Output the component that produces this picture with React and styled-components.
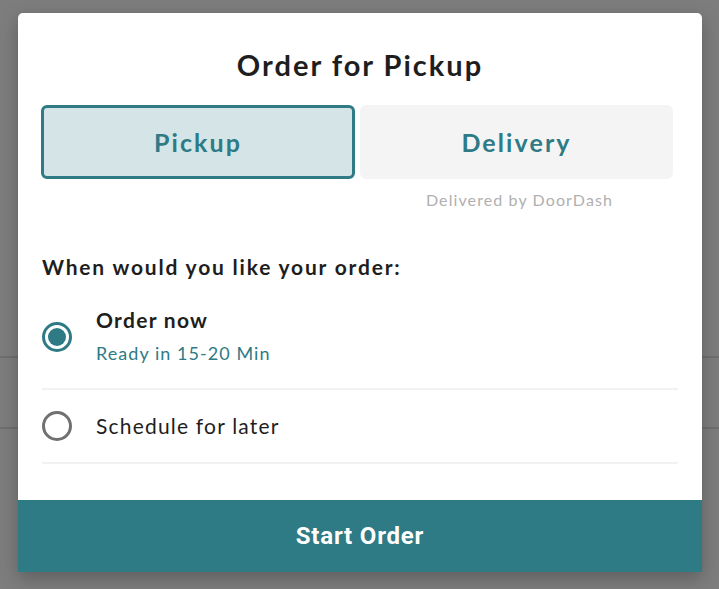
import React, { useState } from "react";
import styled, { createGlobalStyle } from "styled-components";

const Global = createGlobalStyle`
  html, body { margin: 0; padding: 0; }
  body {
    background: #7d7d7d;
    font-family: "Lato", "Noto Sans", sans-serif;
    color: #1e1e1e;
  }
`;

const Page = styled.div`
  position: relative;
  width: 719px;
  height: 589px;
  overflow: hidden;
  background: #7d7d7d;
`;

const BackRows = styled.div`
  display: flex;
  flex-direction: column;
  padding-top: 287px;
`;

const BackRow = styled.div`
  height: 69px;
  border-bottom: 2px solid #6f6f6f;
`;

const Modal = styled.div`
  position: absolute;
  left: 18px;
  top: 13px;
  width: 684px;
  display: flex;
  flex-direction: column;
  background: #fff;
  border-radius: 5px 5px 0 0;
  box-shadow: 0 6px 18px rgba(0, 0, 0, 0.25);
`;

const Body = styled.div`
  display: flex;
  flex-direction: column;
  padding: 34px 24px 36px;
`;

const Title = styled.h1`
  margin: 0;
  text-align: center;
  font-size: 29px;
  line-height: 36px;
  font-weight: 700;
  letter-spacing: 2px;
  color: #1e1e1e;
`;

const Tabs = styled.div`
  display: grid;
  grid-template-columns: 314px 313px;
  column-gap: 5px;
  row-gap: 11px;
  margin: 22px 0 0 -1px;
`;

const Tab = styled.button`
  height: 74px;
  border-radius: 6px;
  border: 3px solid ${(p) => (p.$active ? "#2e7a85" : "transparent")};
  background: ${(p) => (p.$active ? "#d5e4e7" : "#f4f4f4")};
  color: #2e7a85;
  font-family: inherit;
  font-size: 25px;
  font-weight: 700;
  letter-spacing: 2.1px;
  cursor: pointer;
  padding: 0;
`;

const Caption = styled.div`
  grid-column: 2;
  text-align: center;
  font-size: 16px;
  line-height: 20px;
  letter-spacing: 1.1px;
  color: #b0b0b0;
  padding-left: 6px;
`;

const Heading = styled.h2`
  margin: 44px 0 5px;
  font-size: 21px;
  line-height: 26px;
  font-weight: 700;
  letter-spacing: 1.8px;
  color: #1e1e1e;
`;

const Options = styled.div`
  display: flex;
  flex-direction: column;
`;

const Option = styled.label`
  display: flex;
  align-items: center;
  gap: 24px;
  padding: 21px 0;
  border-bottom: 2px solid #f2f2f2;
  cursor: pointer;
`;

const Radio = styled.span`
  flex: none;
  box-sizing: border-box;
  width: 30px;
  height: 30px;
  border-radius: 50%;
  border: 3px solid ${(p) => (p.$checked ? "#2e7a85" : "#707070")};
  display: flex;
  align-items: center;
  justify-content: center;
  &::after {
    content: "";
    width: 18px;
    height: 18px;
    border-radius: 50%;
    background: ${(p) => (p.$checked ? "#2e7a85" : "transparent")};
  }
`;

const OptionText = styled.div`
  display: flex;
  flex-direction: column;
  gap: 5px;
`;

const OptionLabel = styled.span`
  font-size: 21px;
  line-height: 28px;
  font-weight: ${(p) => (p.$bold ? 700 : 400)};
  letter-spacing: ${(p) => (p.$bold ? "1.3px" : "1.2px")};
  color: #1e1e1e;
`;

const OptionSub = styled.span`
  font-size: 18px;
  line-height: 28px;
  letter-spacing: 1.05px;
  color: #2e7a85;
`;

const StartButton = styled.button`
  height: 72px;
  border: none;
  background: #2e7a85;
  color: #fff;
  font-family: "Roboto", "Liberation Sans", sans-serif;
  font-size: 24px;
  font-weight: 700;
  letter-spacing: 0.8px;
  cursor: pointer;
`;

export default function App() {
  const [mode, setMode] = useState("pickup");
  const [when, setWhen] = useState("now");
  return (
    <>
      <Global />
      <Page>
        <BackRows>
          <BackRow />
          <BackRow />
        </BackRows>
        <Modal>
          <Body>
            <Title>Order for Pickup</Title>
            <Tabs>
              <Tab $active={mode === "pickup"} onClick={() => setMode("pickup")}>
                Pickup
              </Tab>
              <Tab $active={mode === "delivery"} onClick={() => setMode("delivery")}>
                Delivery
              </Tab>
              <Caption>Delivered by DoorDash</Caption>
            </Tabs>
            <Heading>When would you like your order:</Heading>
            <Options>
              <Option onClick={() => setWhen("now")}>
                <Radio $checked={when === "now"} />
                <OptionText>
                  <OptionLabel $bold>Order now</OptionLabel>
                  <OptionSub>Ready in 15-20 Min</OptionSub>
                </OptionText>
              </Option>
              <Option onClick={() => setWhen("later")}>
                <Radio $checked={when === "later"} />
                <OptionText>
                  <OptionLabel>Schedule for later</OptionLabel>
                </OptionText>
              </Option>
            </Options>
          </Body>
          <StartButton>Start Order</StartButton>
        </Modal>
      </Page>
    </>
  );
}
